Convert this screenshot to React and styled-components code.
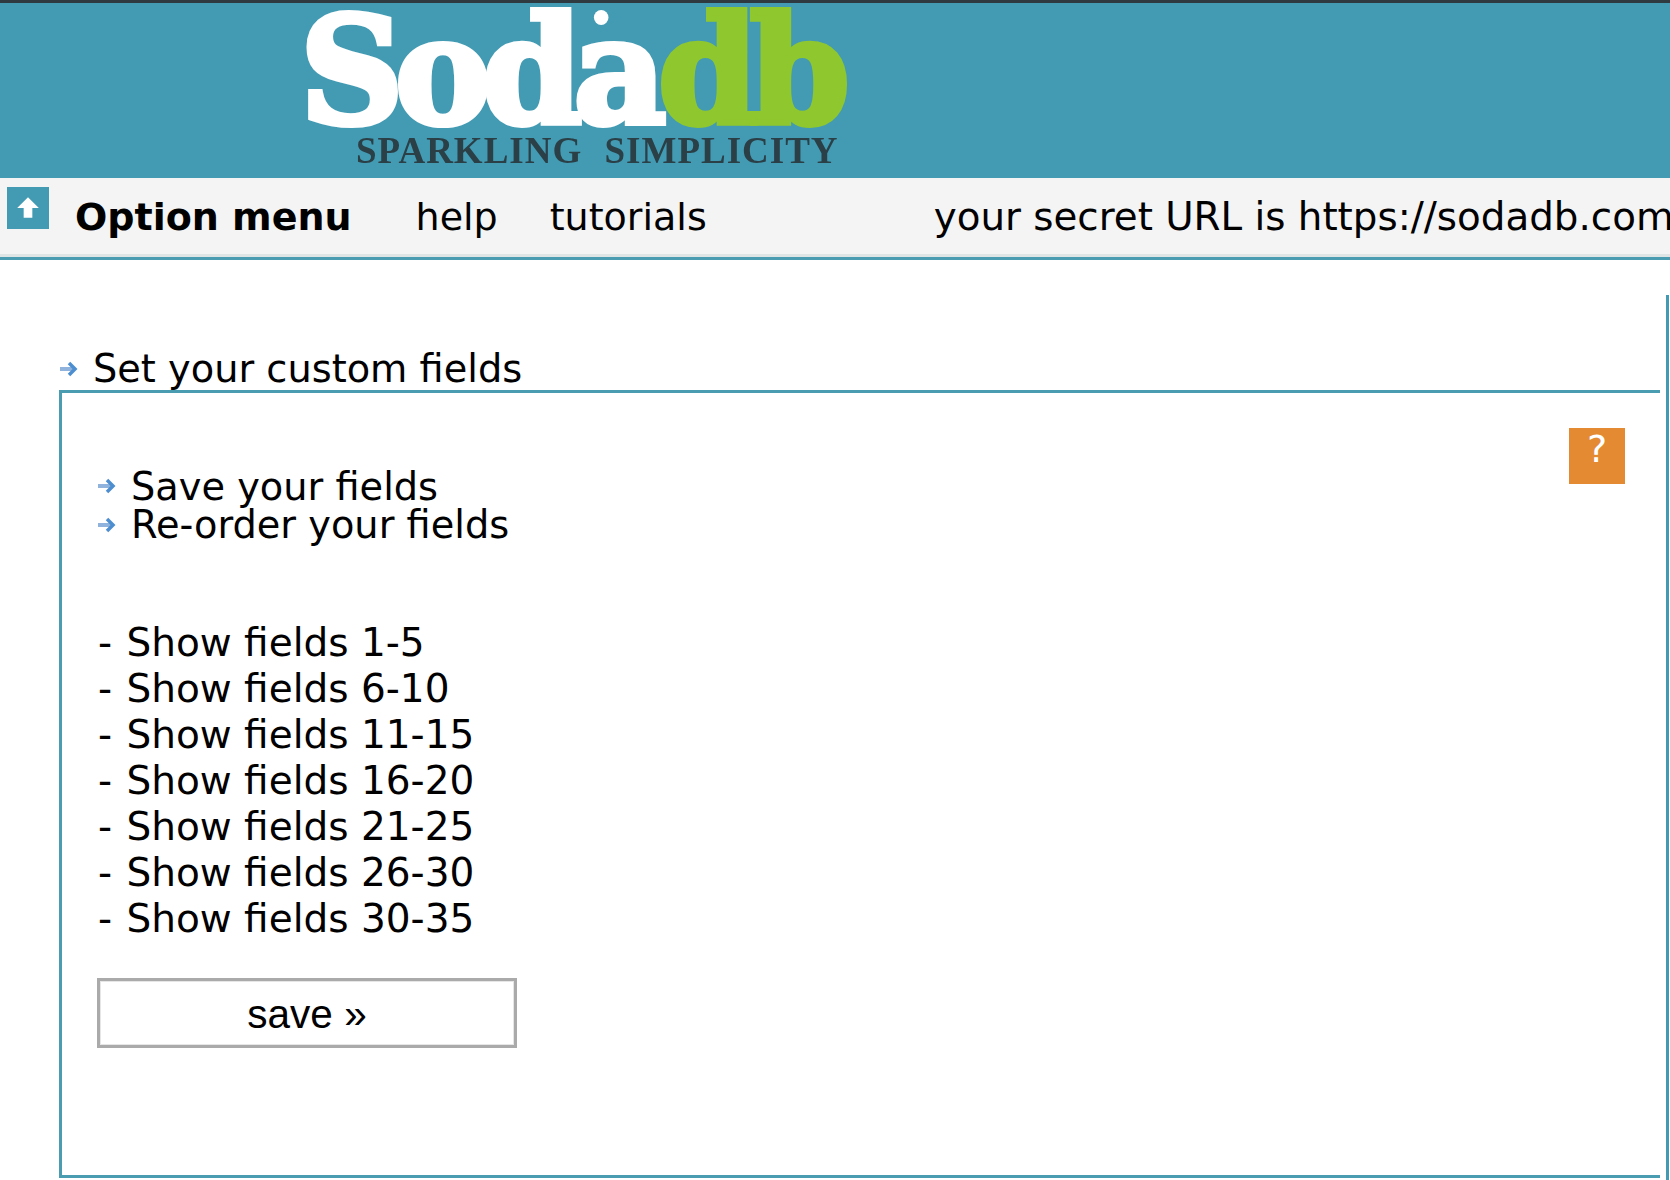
import React from 'react';
import styled, { createGlobalStyle } from 'styled-components';

const GlobalStyle = createGlobalStyle`
  html, body {
    margin: 0;
    padding: 0;
    background: #fff;
  }
  body {
    font-family: "DejaVu Sans", Verdana, sans-serif;
    color: #000;
    overflow: hidden;
  }
`;

const Page = styled.div`
  width: 1670px;
  height: 1180px;
  overflow: hidden;
  background: #fff;
`;

const Header = styled.header`
  height: 175px;
  border-top: 3px solid #2f3a40;
  background: #429bb3;
  padding-left: 300px;
  overflow: hidden;
`;

const LogoWord = styled.div`
  position: relative;
  height: 128px;
  width: 600px;
  font-family: "DejaVu Serif", "Liberation Serif", serif;
  font-weight: 700;
  font-size: 148px;
  line-height: 136px;
  letter-spacing: -9px;
  color: #fff;
  white-space: nowrap;
  transform: scaleX(0.97);
  transform-origin: left center;
  filter: blur(0.7px);
  -webkit-text-stroke: 6px currentColor;

  &::after {
    content: '';
    position: absolute;
    left: 303px;
    top: 7px;
    width: 15px;
    height: 15px;
    border-radius: 50%;
    background: #fff;
  }
`;

const LogoGreen = styled.span`
  color: #8fc72f;
`;

const Tagline = styled.div`
  margin-left: 56px;
  font-family: "Liberation Serif", serif;
  font-weight: 700;
  font-size: 37px;
  line-height: 40px;
  letter-spacing: 1px;
  word-spacing: 12px;
  color: #2b3f47;
  white-space: nowrap;
  filter: blur(0.7px);
`;

const Nav = styled.nav`
  height: 77px;
  padding: 0 0 2px 7px;
  display: flex;
  align-items: center;
  background: #f4f4f4;
  border-bottom: 3px solid #4a9cb0;
  box-shadow: inset 0 -3px 0 #dfe4e5;
  font-size: 38px;
  white-space: nowrap;
  overflow: hidden;
`;

const UpButton = styled.span`
  width: 42px;
  height: 42px;
  margin-top: -18px;
  margin-right: 26px;
  flex: none;
  display: flex;
  align-items: center;
  justify-content: center;
  background: #429bb3;
`;

const NavTitle = styled.span`
  font-weight: 700;
  margin-right: 64px;
`;

const NavLink = styled.a`
  margin-right: ${(p) => p.$gap}px;
`;

const SecretUrl = styled.span`
  font-size: 38.8px;
`;

const Main = styled.main`
  display: flex;
  align-items: flex-start;
  padding-left: 59px;
`;

const Column = styled.div`
  width: 1601px;
  padding-top: 65px;
`;

const Heading = styled.div`
  display: flex;
  align-items: center;
  height: 43px;
  padding-top: 22px;
  font-size: 38.3px;
`;

const Arrow = styled.svg`
  flex: none;
  width: 20px;
  height: 20px;
  margin-right: ${(p) => p.$gap}px;
`;

const Panel = styled.section`
  position: relative;
  box-sizing: border-box;
  height: 788px;
  border-top: 3px solid #4a9cb0;
  border-left: 3px solid #4a9cb0;
  border-bottom: 3px solid #4a9cb0;
  padding: 74px 0 0 35px;
`;

const HelpBadge = styled.span`
  position: absolute;
  top: 35px;
  right: 35px;
  width: 56px;
  height: 56px;
  background: #e38a33;
  color: #fff;
  font-size: 38px;
  line-height: 42px;
  text-align: center;
`;

const LinkRow = styled.div`
  display: flex;
  align-items: center;
  height: 38.5px;
  font-size: 38.3px;
`;

const FieldList = styled.ul`
  list-style: none;
  margin: 76px 0 0;
  padding: 0 0 0 1px;
  font-size: 39px;
  line-height: 46px;
`;

const Dash = styled.span`
  margin-right: 2px;
`;

const SaveButton = styled.button`
  display: block;
  box-sizing: border-box;
  width: 420px;
  height: 70px;
  margin-top: 36px;
  background: #fff;
  border: 3px solid #aaa;
  box-shadow: inset 0 0 0 1px #e6e6e6;
  font-family: "Liberation Sans", Arial, sans-serif;
  font-size: 40.5px;
  color: #000;
  padding: 3px 0 0;
`;

const Stripe = styled.div`
  flex: none;
  width: 3px;
  height: 885px;
  margin-top: 35px;
  margin-left: 6px;
  background: #429bb3;
`;

const BlueArrow = ({ gap }) => (
  <Arrow $gap={gap} viewBox="0 0 20 20">
    <path d="M1 10h13" stroke="#8fb3dd" strokeWidth="4" fill="none" />
    <path d="M10 4l6 6-6 6" stroke="#4d8ed0" strokeWidth="3.5" fill="none" />
  </Arrow>
);

const ranges = ['1-5', '6-10', '11-15', '16-20', '21-25', '26-30', '30-35'];

export default function App() {
  return (
    <Page>
      <GlobalStyle />
      <Header>
        <LogoWord>
          Soda<LogoGreen>db</LogoGreen>
        </LogoWord>
        <Tagline>SPARKLING SIMPLICITY</Tagline>
      </Header>
      <Nav>
        <UpButton>
          <svg width="26" height="26" viewBox="0 0 24 24">
            <path d="M12 2l10 10h-6v9H8v-9H2z" fill="#fff" />
          </svg>
        </UpButton>
        <NavTitle>Option menu</NavTitle>
        <NavLink $gap={52}>help</NavLink>
        <NavLink $gap={227}>tutorials</NavLink>
        <SecretUrl>your secret URL is https://sodadb.com</SecretUrl>
      </Nav>
      <Main>
        <Column>
          <Heading>
            <BlueArrow gap={14} />
            Set your custom fields
          </Heading>
          <Panel>
            <HelpBadge>?</HelpBadge>
            <LinkRow>
              <BlueArrow gap={14} />
              Save your fields
            </LinkRow>
            <LinkRow>
              <BlueArrow gap={14} />
              Re-order your fields
            </LinkRow>
            <FieldList>
              {ranges.map((r) => (
                <li key={r}>
                  <Dash>-</Dash> Show fields {r}
                </li>
              ))}
            </FieldList>
            <SaveButton>save »</SaveButton>
          </Panel>
        </Column>
        <Stripe />
      </Main>
    </Page>
  );
}
